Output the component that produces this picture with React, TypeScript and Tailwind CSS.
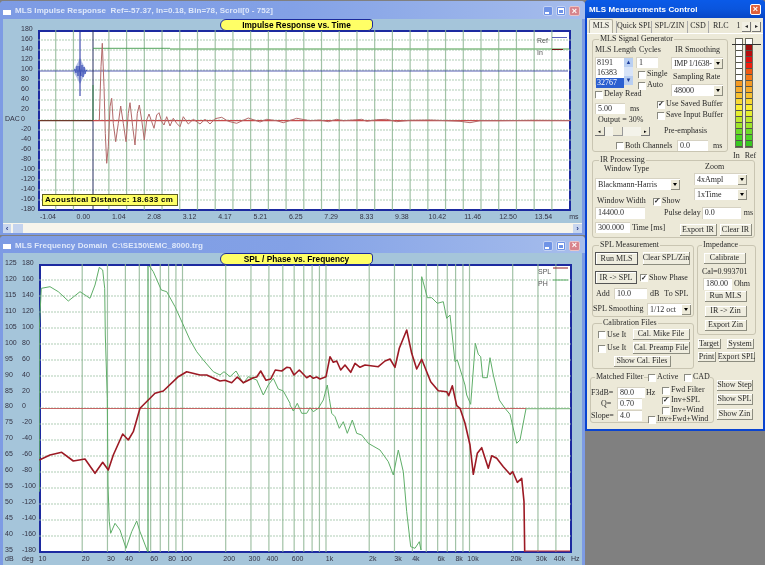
import React from "react";

type P = [number, number];
const W1X = Array.from({ length: 30 }, (_, i) => 38 + i * 17.72).filter((_, i) => i !== 3);
const W1Y = Array.from({ length: 19 }, (_, i) => 30 + i * 10);
const W2Y = Array.from({ length: 19 }, (_, i) => 264 + i * 16);
const fx = (f: number) => 39 + 143.5 * Math.log10(f / 10);
const W2F = [20, 30, 40, 50, 60, 70, 80, 90, 100, 200, 300, 400, 500, 600, 700, 800, 900, 1000, 2000, 3000, 4000, 5000, 6000, 7000, 8000, 9000, 10000, 20000, 30000, 40000];

const z1 = (pts: P[]) => pts.map(([x, y]) => `${(x / 3).toFixed(1)},${(y / 3).toFixed(1)}`).join(" ");
const z2 = (pts: P[]) => pts.map(([x, y]) => `${(x / 3).toFixed(1)},${(235 + y / 3).toFixed(1)}`).join(" ");
const shift = (pts: P[]) => pts.map(([x, y]) => [x + 870, y] as P);

const impulse: P[] = [[298,362],[303,200],[307,130],[312,260],[316,400],[320,490],[325,440],[330,320],[335,295],[340,370],[347,425],[355,370],[362,318],[370,370],[378,425],[385,340],[390,308],[398,380],[405,435],[412,340],[418,315],[425,360],[433,420],[440,360],[447,342],[455,365],[462,385],[470,345],[477,338],[485,365],[492,375],[500,350],[510,378],[520,355],[530,370],[540,380],[550,350],[565,372],[580,358],[600,372],[615,358],[630,372],[645,356],[665,352],[685,364],[710,370],[745,354],[780,366],[800,358],[830,362],[850,368],[890,355],[930,362],[960,360],[985,365],[1010,358],[1030,362],[1060,360],[1085,358],[1100,364],[1130,359],[1160,358],[1190,365],[1230,361],[1290,360],[1340,362],[1380,364],[1410,368],[1440,362],[1500,362],[1600,361],[1800,362],[1885,362],[1900,362],[1915,355],[1930,370],[1945,360],[1955,366],[2010,362],[2030,372],[2045,356],[2060,364],[2325,362]];

const phaseA: P[] = [[118,770],[118,280],[124,160],[150,155],[175,170],[205,198],[240,170],[270,190],[285,150],[298,97],[308,105],[314,160],[316,300],[322,490],[324,750],[328,860],[332,895],[345,865],[360,885],[378,940],[395,890],[410,858],[420,890],[443,950]];
const phaseB: P[] = [[448,93],[460,110],[484,165],[500,170],[525,215],[550,270],[570,315],[590,350],[610,375],[640,410],[660,420],[672,410],[690,425],[708,408],[730,445],[745,425],[770,435],[790,480],[805,450],[820,430],[835,462],[850,468],[870,505],...shift([[0,510],[10,528],[22,505],[35,535],[50,535],[60,518],[70,530],[85,520],[100,495],[112,450],[118,490],[125,535],[135,545],[148,580],[160,560],[172,595],[187,555],[200,595],[215,600],[235,625],[270,645],[295,680],[310,720],[325,645],[340,710],[350,830],[362,935],[375,940],[388,920],[393,945],[395,125],[402,150],[412,188],[425,188],[442,205],[460,200],[470,250],[480,240],[495,380],[502,375],[525,450],[530,480],[542,508],[556,325],[565,358],[572,365],[578,428],[592,428],[600,368],[610,420],[628,495],[645,520],[660,538],[680,625],[690,615],[708,521],[840,521]])];
const spl: P[] = [[118,675],[150,660],[185,652],[220,678],[255,672],[285,715],[308,682],[325,705],[340,660],[368,597],[385,615],[400,590],[420,520],[445,495],[465,475],[490,468],[535,425],[560,410],[600,420],[620,420],[660,438],[675,436],[695,443],[712,426],[730,443],[760,428],[770,426],[782,408],[798,436],[812,432],[826,405],[845,408],[860,397],[870,398],...shift([[12,420],[28,405],[50,428],[60,422],[70,430],[80,426],[90,432],[108,425],[120,365],[130,382],[140,378],[152,405],[165,390],[182,412],[195,385],[210,397],[225,390],[265,395],[285,378],[300,372],[315,397],[328,340],[350,285],[365,355],[380,402],[395,373],[410,410],[422,440],[445,467],[470,470],[476,482],[487,452],[500,512],[510,520],[525,565],[540,630],[550,718],[562,655],[575,638],[595,700],[605,662],[620,670],[640,695],[660,718],[668,710],[682,742],[695,730],[702,800],[704,950]])];

function TitleButtons() {
  return (
    <div className="flex gap-[3px] items-center">
      <span className="w-[10px] h-[10px] rounded-[2px] bg-[#6f93e6] border border-[#c4d2f2] flex items-end justify-start pl-[1px] pb-[1px]"><span className="w-[4px] h-[2px] bg-white" /></span>
      <span className="w-[10px] h-[10px] rounded-[2px] bg-[#6f93e6] border border-[#c4d2f2] flex items-center justify-center"><span className="w-[6px] h-[6px] border border-white border-t-2" /></span>
      <span className="w-[11px] h-[10px] rounded-[2px] bg-[#d8848c] border border-[#e8c4c8] flex items-center justify-center text-white text-[9px] leading-none font-bold font-['Liberation_Sans',sans-serif]">×</span>
    </div>
  );
}

function WinTitle({ children, short }: { children: React.ReactNode; short?: boolean }) {
  return (
    <div className={`${short ? "h-[17px]" : "h-[18px]"} flex items-center justify-between pt-[2px] pl-[3px] pr-[5px] bg-gradient-to-r from-[#7d9be4] via-[#83a1e6] to-[#a6bdec] rounded-t-[4px]`}>
      <div className="flex items-center gap-[4px] min-w-0">
        <span className="w-[8px] h-[7px] bg-white border-t-2 border-[#7d9be4] shrink-0" />
        <span className="text-[#dfe8fa] text-[8px] font-bold tracking-[0.06px] whitespace-pre font-['Liberation_Sans',sans-serif]">{children}</span>
      </div>
      <TitleButtons />
    </div>
  );
}

function Pill({ children }: { children: React.ReactNode }) {
  return (
    <div className="absolute left-[217px] top-0 z-10 w-[153px] h-[12px] bg-[#ffff66] border border-[#1c2a9c] rounded-l-[6px] rounded-tr-[3px] rounded-br-[5px] flex items-center justify-center text-[8.3px] font-bold leading-none text-black font-['Liberation_Sans',sans-serif]">
      {children}
    </div>
  );
}

const axisText = "text-[7px] leading-[10px] text-[#334] font-['Liberation_Sans',sans-serif]";

function Grid({ xs, ys, x0, x1, y0, y1 }: { xs: number[]; ys: number[]; x0: number; x1: number; y0: number; y1: number }) {
  return (
    <g>
      {ys.map((y) => <line key={`h${y}`} x1={x0} x2={x1} y1={y} y2={y} stroke="#9cc0a2" strokeWidth="1.2" strokeDasharray="2 1" opacity="0.8" />)}
      {xs.map((x) => <line key={`v${x}`} x1={x} x2={x} y1={y0} y2={y1} stroke="#8ab390" strokeWidth="1.2" opacity="0.8" />)}
    </g>
  );
}

function ImpulseWindow() {
  const labels = ["180","160","140","120","100","80","60","40","20","0","-20","-40","-60","-80","-100","-120","-140","-160","-180"];
  const xl = ["-1.04","0.00","1.04","2.08","3.12","4.17","5.21","6.25","7.29","8.33","9.38","10.42","11.46","12.50","13.54"];
  return (
    <section className="w-[585px] h-[234px] mt-[1px] shrink-0 flex flex-col bg-[#7d9be4] rounded-t-[4px]">
      <WinTitle>MLS Impulse Response  Ref=-57.37, In=0.18, Bin=78, Scroll[0 - 752]</WinTitle>
      <div className="mx-[3px] mb-[2px] flex-1 bg-[#a5c5da] flex flex-col relative">
        <Pill>Impulse Response vs. Time</Pill>
        <div className="h-[11px]" />
        <div className="flex">
          <div className={`w-[30px] h-[189px] -mt-[6px] -mb-[4px] flex flex-col justify-between pl-[2px] ${axisText}`}>
            {labels.map((l) => (
              <div key={l} className="flex h-[10px]">
                <span className="w-[16px] shrink-0">{l === "0" ? "DAC" : ""}</span>
                <span>{l}</span>
              </div>
            ))}
          </div>
          <div className="w-[5px]" />
          <div className="w-[533px] h-[181px] relative bg-white border-2 border-[#1c2aa0]">
            <svg className="absolute -left-[2px] -top-[2px]" width="533" height="181" viewBox="38 30 533 181">
              <Grid xs={W1X.slice(1)} ys={W1Y.slice(1, 18)} x0={38} x1={571} y0={30} y1={210} />
              <line x1="38" x2="568" y1="71" y2="71" stroke="#2a32a0" strokeWidth="0.8" />
              <line x1="93" x2="93" y1="30" y2="210" stroke="#283060" strokeWidth="1" />
              <polygon fill="#8ea0d8" opacity="0.7" points="73,71 77,64 80,58 83,64 87,71 83,78 80,84 77,78" />
              <line x1="80" x2="80" y1="30" y2="96" stroke="#1c2aa0" strokeWidth="1" />
              <polyline fill="none" stroke="#2a40b0" strokeWidth="0.8" opacity="0.85" points="74,71 75,69 76,73 77,66 78,76 79,66 81,76 82,65 83,77 84,67 85,74 86,70 87,71" />
              <line x1="93" x2="93" y1="120" y2="85" stroke="#3f8f4a" strokeWidth="1" />
              <line x1="93" x2="170" y1="48.3" y2="48.3" stroke="#3f9a4a" strokeWidth="0.9" />
              <line x1="170" x2="569" y1="49" y2="49" stroke="#85bd85" strokeWidth="1.4" />
              <line x1="38" x2="93" y1="120.6" y2="120.6" stroke="#6d3a2a" strokeWidth="1.2" />
              <line x1="93" x2="569" y1="120.6" y2="120.6" stroke="#c84a4a" strokeWidth="1.2" />
              <polyline fill="none" stroke="#b26a6a" strokeWidth="1" strokeLinejoin="round" points={z1(impulse)} />
              <line x1="552" x2="567" y1="37.5" y2="37.5" stroke="#3038a8" strokeWidth="0.8" />
              <line x1="552" x2="563" y1="49.5" y2="49.5" stroke="#7a1818" strokeWidth="1" />
            </svg>
            <span className="absolute left-[497px] top-[4px] text-[7px] leading-[10px] text-[#555] font-['Liberation_Sans',sans-serif]">Ref</span>
            <span className="absolute left-[497px] top-[16px] text-[7px] leading-[10px] text-[#555] font-['Liberation_Sans',sans-serif]">In</span>
            <div className="absolute left-[2px] bottom-[3px] w-[136px] h-[12px] bg-[#ffff66] border border-[#5b5b20] flex items-center pl-[2px] text-[8px] font-bold leading-none text-black tracking-[0.3px] whitespace-nowrap font-['Liberation_Sans',sans-serif]">
              Acoustical Distance: 18.633 cm
            </div>
          </div>
        </div>
        <div className={`h-[12px] flex items-center pl-[27.3px] ${axisText}`}>
          {xl.map((l) => <span key={l} className="w-[35.4px] text-center shrink-0">{l}</span>)}
          <span className="ml-[8px]">ms</span>
        </div>
        <div className="h-[10px] bg-[#f7f5ec] flex justify-between items-center">
          <span className="w-[8px] h-[9px] bg-[#c8d6ee] text-[#2a3f8a] text-[8px] leading-[9px] text-center font-bold font-['Liberation_Sans',sans-serif]">‹</span>
          <span className="w-[10px] h-[9px] ml-[2px] bg-[#c4d3ee] mr-auto" />
          <span className="w-[9px] h-[9px] bg-[#c8d6ee] text-[#2a3f8a] text-[8px] leading-[9px] text-center font-bold font-['Liberation_Sans',sans-serif]">›</span>
        </div>
      </div>
    </section>
  );
}

function FreqWindow() {
  const db = ["125","120","115","110","105","100","95","90","85","80","75","70","65","60","55","50","45","40","35"];
  const deg = ["180","160","140","120","100","80","60","40","20","0","-20","-40","-60","-80","-100","-120","-140","-160","-180"];
  const xl: [string, number][] = [["10",10],["20",20],["30",30],["40",40],["60",60],["80",80],["100",100],["200",200],["300",300],["400",400],["600",600],["1k",1000],["2k",2000],["3k",3000],["4k",4000],["6k",6000],["8k",8000],["10k",10000],["20k",20000],["30k",30000],["40k",40000]];
  return (
    <section className="w-[585px] h-[329px] shrink-0 flex flex-col bg-[#7d9be4] rounded-t-[4px] mt-[1px]">
      <WinTitle short>MLS Frequency Domain  C:\SE150\EMC_8000.trg</WinTitle>
      <div className="mx-[3px] flex-1 bg-[#a5c5da] flex flex-col relative">
        <Pill>SPL / Phase vs. Frequency</Pill>
        <div className="h-[11px]" />
        <div className="flex">
          <div className={`w-[31px] h-[297px] -mt-[6px] -mb-[5px] flex flex-col justify-between pl-[2px] ${axisText}`}>
            {db.map((d, i) => (
              <div key={d} className="flex h-[10px]">
                <span className="w-[17px] shrink-0">{d}</span>
                <span>{deg[i]}</span>
              </div>
            ))}
          </div>
          <div className="w-[5px]" />
          <div className="w-[533px] h-[289px] relative bg-white border-2 border-[#1c2aa0]">
            <svg className="absolute -left-[2px] -top-[2px]" width="533" height="289" viewBox="39 264 533 289">
              <Grid xs={W2F.map(fx)} ys={W2Y.slice(1, 18)} x0={39} x1={571} y0={264} y1={552} />
              <line x1="148" x2="148" y1="266" y2="552" stroke="#2f8f3f" strokeWidth="1" />
              <polyline fill="none" stroke="#5fae68" strokeWidth="1" strokeLinejoin="round" points={z2(phaseA)} />
              <polyline fill="none" stroke="#5fae68" strokeWidth="1" strokeLinejoin="round" points={z2(phaseB)} />
              <line x1="41" x2="526" y1="408.5" y2="408.5" stroke="#c25656" strokeWidth="0.9" />
              <line x1="526" x2="570" y1="408.5" y2="408.5" stroke="#8fbf8f" strokeWidth="0.9" />
              <polyline fill="none" stroke="#9c1a24" strokeWidth="1.6" strokeLinejoin="round" points={z2(spl)} />
              <line x1="524" x2="570" y1="551" y2="551" stroke="#c83030" strokeWidth="1.2" />
              <line x1="553" x2="568" y1="268" y2="268" stroke="#8c1c24" strokeWidth="1" />
              <line x1="553" x2="568" y1="280" y2="280" stroke="#5fae68" strokeWidth="1" />
            </svg>
            <span className="absolute left-[497px] top-[1px] text-[7px] leading-[10px] text-[#555] font-['Liberation_Sans',sans-serif]">SPL</span>
            <span className="absolute left-[497px] top-[13px] text-[7px] leading-[10px] text-[#555] font-['Liberation_Sans',sans-serif]">PH</span>
          </div>
        </div>
        <div className={`h-[12px] relative ${axisText}`}>
          <span className="absolute left-[2px] top-[1px]">dB</span>
          <span className="absolute left-[19px] top-[1px]">deg</span>
          {xl.map(([t, f]) => (
            <span key={t} className="absolute top-[1px] -translate-x-1/2" style={{ left: `${fx(f) + 0.5}px` }}>{t}</span>
          ))}
          <span className="absolute left-[568px] top-[1px]">Hz</span>
        </div>
      </div>
    </section>
  );
}

const ctl = "text-[8px] leading-[10px] text-[#2a2a2a] whitespace-nowrap font-['Liberation_Serif',serif]";

function Check({ label, checked, className = "" }: { label?: string; checked?: boolean; className?: string }) {
  return (
    <div className={`h-[10px] flex items-center gap-[2px] ${ctl} ${className}`}>
      <span className="w-[7px] h-[7px] shrink-0 bg-white border-l border-t border-[#8a8a80] shadow-[1px_1px_0_#fff] flex items-center justify-center text-[7px] leading-none font-bold">
        {checked ? "✓" : ""}
      </span>
      {label && <span>{label}</span>}
    </div>
  );
}

function Field({ value, className = "" }: { value: string; className?: string }) {
  return <div className={`h-[11px] bg-white pl-[2px] shrink-0 border-l border-t border-[#d6d2c2] ${ctl} ${className}`}>{value}</div>;
}

function Btn({ children, className = "" }: { children: React.ReactNode; className?: string }) {
  return (
    <div className={`shrink-0 flex items-center justify-center bg-[#efeddf] border-r border-b border-[#8d8d80] shadow-[inset_1px_1px_0_#fff] ${ctl} ${className}`}>
      {children}
    </div>
  );
}

function Combo({ value, className = "" }: { value: string; className?: string }) {
  return (
    <div className={`h-[12px] bg-white flex items-center justify-between shrink-0 border-l border-t border-[#d6d2c2] ${ctl} ${className}`}>
      <span className="pl-[2px]">{value}</span>
      <span className="w-[9px] h-[10px] shrink-0 bg-[#ece9d8] border-r border-b border-[#8d8d80] flex items-center justify-center">
        <span className="w-0 h-0 border-x-[2.5px] border-x-transparent border-t-[3px] border-t-black" />
      </span>
    </div>
  );
}

function Group({ title, className = "", children }: { title: string; className?: string; children: React.ReactNode }) {
  return (
    <fieldset className={`border border-[#c9c5b2] rounded-[3px] min-w-0 shrink-0 ${className}`}>
      <legend className={`ml-[4px] px-[1px] ${ctl}`}>{title}</legend>
      {children}
    </fieldset>
  );
}

function Meter({ colors }: { colors: string[] }) {
  return (
    <div className="flex flex-col w-[8px] border border-[#6d6d60]">
      {colors.map((c, i) => <span key={i} className="h-[6px] border-b border-[#55554a]" style={{ background: c }} />)}
    </div>
  );
}

const IN = ["#fff","#fff","#fff","#fff","#fff","#fff","#fff","#f59a22","#f7ac2c","#f7c030","#f9d932","#f9ee30","#e6ee2e","#bfe82c","#9ee42a","#6cdc26","#4cd424","#38c820"];
const REF = ["#fff","#a01010","#b80e0e","#e01010","#f02010","#f05a12","#f47a18","#f59a22","#f7ac2c","#f7c030","#f9d932","#f9ee30","#e6ee2e","#bfe82c","#9ee42a","#6cdc26","#4cd424","#38c820"];

function ControlPanel() {
  return (
    <aside className="w-[180px] h-[431px] shrink-0 relative flex flex-col bg-[#ece9d8] border-x-2 border-b-2 border-[#0a44d0] rounded-t-[4px]">
      <div className="-mx-[2px] h-[18px] shrink-0 rounded-t-[4px] bg-gradient-to-b from-[#0a5ae8] via-[#0a55dd] to-[#0746c6] flex items-center justify-between pt-[1px] pl-[4px] pr-[4px]">
        <span className="text-white text-[8px] font-bold tracking-[0.12px] font-['Liberation_Sans',sans-serif]">MLS Measurements Control</span>
        <span className="w-[11px] h-[11px] rounded-[2px] bg-[#e0603a] border border-white text-white text-[9px] leading-[9px] text-center font-bold font-['Liberation_Sans',sans-serif]">×</span>
      </div>
      <div className={`h-[15px] shrink-0 flex items-end pl-[2px] relative ${ctl} font-['Liberation_Sans',sans-serif]`}>
        <span className="w-[24px] h-[14px] text-center leading-[12px] bg-[#f2f0e4] border-t border-x border-[#b0ad9c] rounded-t-[2px]">MLS</span>
        <span className="ml-[3px] w-[35px] h-[12px] border-l border-[#aaa] text-center">Quick SPL</span>
        <span className="w-[36px] h-[12px] border-l border-[#aaa] text-center">SPL/ZIN</span>
        <span className="w-[21px] h-[12px] border-l border-[#aaa] text-center">CSD</span>
        <span className="w-[28px] h-[12px] border-l border-[#aaa] pl-[4px]">RLC</span>
        <span className="w-[5px] h-[12px] text-center">1</span>
        <span className="absolute right-[2px] bottom-[1px] flex gap-[1px]">
          <span className="w-[9px] h-[10px] bg-[#f2f0e4] border-r border-b border-[#777] text-center text-[6px] leading-[9px]">◂</span>
          <span className="w-[9px] h-[10px] bg-[#f2f0e4] border-r border-b border-[#777] text-center text-[6px] leading-[9px]">▸</span>
        </span>
      </div>
      <div className="flex-1 flex flex-col pl-[5px] pt-[1px] shadow-[inset_0_1px_0_#fff]">
        {/* Generator and meters */}
        <div className="flex h-[121px]">
          <Group title="MLS Signal Generator" className="w-[136px] h-[118px] pl-[2px]">
            <div className="flex h-[56px] pt-[1px]">
              <div className="w-[76px] flex flex-col">
                <div className="flex">
                  <span className={`w-[44px] ${ctl}`}>MLS Length</span>
                  <span className={ctl}>Cycles</span>
                </div>
                <div className="flex mt-[2px]">
                  <div className="w-[38px] h-[28px] bg-white flex border-l border-t border-[#d6d2c2]">
                    <div className={`flex-1 flex flex-col ${ctl} leading-[9px]`}>
                      <span className="pl-[1px]">8191</span>
                      <span className="pl-[1px]">16383</span>
                      <span className="pl-[1px] bg-[#2b5fd0] text-white">32767</span>
                    </div>
                    <div className="w-[9px] flex flex-col justify-between bg-[#d8e4f8]">
                      <span className="h-[9px] bg-[#b9cff2] text-[#1c3c9c] text-[6px] leading-[9px] text-center">▲</span>
                      <span className="h-[9px] bg-[#b9cff2] text-[#1c3c9c] text-[6px] leading-[9px] text-center">▼</span>
                    </div>
                  </div>
                  <div className="ml-[3px] flex flex-col">
                    <Field value="1" className="w-[22px]" />
                    <Check label="Single" className="mt-[1px] ml-[2px]" />
                    <Check label="Auto" className="mt-[1px] ml-[2px]" />
                  </div>
                </div>
                <Check label="Delay Read" className="-mt-[1px]" />
              </div>
              <div className="flex flex-col">
                <span className={`ml-[4px] ${ctl}`}>IR Smoothing</span>
                <Combo value="IMP 1/1638-" className="w-[52px] mt-[2px] tracking-[-0.3px]" />
                <span className={`ml-[2px] mt-[3px] ${ctl}`}>Sampling Rate</span>
                <Combo value="48000" className="w-[52px] mt-[2px]" />
              </div>
            </div>
            <div className="flex">
              <div className="w-[62px] flex flex-col mt-[3px]">
                <div className="flex items-center">
                  <Field value="5.00" className="w-[30px]" />
                  <span className={`ml-[5px] ${ctl}`}>ms</span>
                </div>
                <span className={`mt-[1px] ml-[3px] ${ctl}`}>Output = 30%</span>
                <div className="mt-[2px] w-[55px] h-[9px] bg-[#f4f3ea] flex items-center justify-between">
                  <span className="w-[10px] h-[9px] bg-[#ece9d8] border-r border-b border-[#777] text-[5px] leading-[8px] text-center">◂</span>
                  <span className="w-[10px] h-[9px] bg-[#ece9d8] border-r border-b border-[#999] mr-auto ml-[8px]" />
                  <span className="w-[9px] h-[9px] bg-[#ece9d8] border-r border-b border-[#777] text-[5px] leading-[8px] text-center">▸</span>
                </div>
              </div>
              <div className="flex flex-col -mt-[1px]">
                <Check label="Use Saved Buffer" checked />
                <Check label="Save Input Buffer" className="mt-[1px]" />
                <span className={`mt-[6px] ml-[7px] ${ctl}`}>Pre-emphasis</span>
              </div>
            </div>
            <div className="flex items-center mt-[4px] ml-[21px]">
              <Check label="Both Channels" className="w-[61px]" />
              <Field value="0.0" className="w-[31px] h-[10px] leading-[9px]" />
              <span className={`ml-[5px] ${ctl}`}>ms</span>
            </div>
          </Group>
          <div className="ml-[7px] pt-[4px] flex flex-col relative">
            <div className="flex gap-[2px]">
              <Meter colors={IN} />
              <Meter colors={REF} />
            </div>
            <span className="absolute -left-[3px] -right-[5px] top-[10px] h-px bg-[#333]" />
            <div className={`flex gap-[5px] mt-[3px] -ml-[2px] ${ctl}`}><span>In</span><span>Ref</span></div>
          </div>
        </div>

        {/* IR Processing */}
        <Group title="IR Processing" className="w-[163px] h-[83px] pl-[2px]">
          <div className="flex h-[30px]">
            <div className="w-[99px] flex flex-col -mt-[1px]">
              <span className={`ml-[9px] ${ctl}`}>Window Type</span>
              <Combo value="Blackmann-Harris" className="w-[85px] mt-[4px]" />
            </div>
            <div className="flex flex-col -mt-[3px]">
              <span className={`ml-[11px] ${ctl}`}>Zoom</span>
              <Combo value="4xAmpl" className="w-[53px] mt-[1px]" />
              <Combo value="1xTime" className="w-[53px] mt-[3px]" />
            </div>
          </div>
          <div className="flex items-center ml-[2px]">
            <span className={`w-[56px] ${ctl}`}>Window Width</span>
            <Check label="Show" checked className="mt-[1px]" />
          </div>
          <div className="flex items-center mt-[1px]">
            <Field value="14400.0" className="w-[50px] h-[12px]" />
            <span className={`ml-[19px] ${ctl}`}>Pulse delay</span>
            <Field value="0.0" className="w-[39px] h-[12px] ml-[1px]" />
            <span className={`ml-[3px] ${ctl}`}>ms</span>
          </div>
          <div className="flex items-start mt-[3px]">
            <Field value="300.000" className="w-[35px]" />
            <span className={`ml-[2px] w-[48px] mt-[1px] ${ctl}`}>Time [ms]</span>
            <Btn className="w-[37px] h-[12px] mt-[2px]">Export IR</Btn>
            <Btn className="w-[32px] h-[12px] mt-[2px] ml-[3px]">Clear IR</Btn>
          </div>
        </Group>

        <div className="flex mt-[2px]">
          <div className="flex flex-col w-[102px]">
            <Group title="SPL Measurement" className="h-[77px] pl-[2px]">
              <div className="flex items-center mt-[2px]">
                <Btn className="w-[43px] h-[13px] border border-[#555]">Run MLS</Btn>
                <Btn className="w-[47px] h-[13px] ml-[5px]">Clear SPL/Zin</Btn>
              </div>
              <div className="flex items-center mt-[6px]">
                <Btn className="w-[42px] h-[13px] border border-[#555]">IR -&gt; SPL</Btn>
                <Check label="Show Phase" checked className="ml-[3px]" />
              </div>
              <div className="flex items-center mt-[4px]">
                <span className={`w-[19px] pl-[1px] ${ctl}`}>Add</span>
                <Field value="10.0" className="w-[33px] h-[10px] leading-[9px]" />
                <span className={`ml-[3px] ${ctl}`}>dB</span>
                <span className={`ml-[5px] ${ctl}`}>To SPL</span>
              </div>
              <div className="flex items-center mt-[4px] -ml-[2px]">
                <span className={`w-[54px] ${ctl}`}>SPL Smoothing</span>
                <Combo value="1/12 oct" className="w-[44px]" />
              </div>
            </Group>
            <Group title="Calibration Files" className="h-[51px] mt-[1px] pl-[5px]">
              <div className="flex items-center mt-[1px]">
                <Check label="Use It" className="w-[35px]" />
                <Btn className="w-[57px] h-[11px]">Cal. Mike File</Btn>
              </div>
              <div className="flex items-center mt-[2px]">
                <Check label="Use It" className="w-[35px]" />
                <Btn className="w-[57px] h-[12px]">Cal. Preamp File</Btn>
              </div>
              <div className="flex mt-[2px] ml-[16px]">
                <Btn className="w-[57px] h-[11px]">Show Cal. Files</Btn>
              </div>
            </Group>
          </div>
          <div className="flex flex-col w-[59px] ml-[3px]">
            <Group title="Impedance" className="h-[95px]">
              <Btn className="h-[11px] w-[42px] mt-[3px] ml-[6px]">Calibrate</Btn>
              <span className={`block mt-[3px] ml-[4px] ${ctl}`}>Cal=0.993701</span>
              <div className="flex items-center mt-[1px] ml-[5px]">
                <Field value="180.00" className="w-[29px] h-[12px]" />
                <span className={`ml-[2px] ${ctl}`}>Ohm</span>
              </div>
              <Btn className="h-[11px] w-[42px] mt-[1px] ml-[7px]">Run MLS</Btn>
              <Btn className="h-[11px] w-[42px] mt-[4px] ml-[7px]">IR -&gt; Zin</Btn>
              <Btn className="h-[11px] w-[42px] mt-[3px] ml-[7px]">Export Zin</Btn>
            </Group>
            <div className="flex gap-[6px] mt-[4px] ml-[1px]">
              <Btn className="w-[23px] h-[10px]">Target</Btn>
              <Btn className="w-[27px] h-[10px]">System</Btn>
            </div>
            <div className="flex gap-[3px] mt-[3px] ml-[1px]">
              <Btn className="w-[18px] h-[10px]">Print</Btn>
              <Btn className="w-[36px] h-[10px]">Export SPL</Btn>
            </div>
          </div>
        </div>

        <div className="flex mt-[3px] -ml-[2px]">
          <Group title="Matched Filter" className="w-[124px] h-[51px] relative">
            <div className="absolute left-[57px] -top-[10px] flex bg-[#ece9d8]">
              <Check label="Active" className="w-[36px]" />
              <Check label="CAD" />
            </div>
            <div className="flex">
              <div className="flex flex-col w-[71px] mt-[5px]">
                <div className="flex items-center">
                  <span className={`w-[26px] ${ctl}`}>F3dB=</span>
                  <Field value="80.0" className="w-[28px] h-[10px] leading-[9px]" />
                  <span className={`ml-[1px] ${ctl}`}>Hz</span>
                </div>
                <div className="flex items-center">
                  <span className={`w-[26px] pl-[10px] ${ctl}`}>Q=</span>
                  <Field value="0.70" className="w-[25px] h-[10px] leading-[9px]" />
                </div>
                <div className="flex items-center mt-[1px]">
                  <span className={`w-[26px] ${ctl}`}>Slope=</span>
                  <Field value="4.0" className="w-[25px] h-[10px] leading-[9px]" />
                </div>
              </div>
              <div className="flex flex-col mt-[3px]">
                <Check label="Fwd Filter" />
                <Check label="Inv+SPL" checked />
                <Check label="Inv+Wind" />
                <Check label="Inv+Fwd+Wind" className="-ml-[14px] -mt-[1px]" />
              </div>
            </div>
          </Group>
          <div className="flex flex-col ml-[3px] mt-[8px]">
            <Btn className="w-[36px] h-[11px]">Show Step</Btn>
            <Btn className="w-[36px] h-[11px] mt-[3px]">Show SPL</Btn>
            <Btn className="w-[36px] h-[11px] mt-[4px]">Show Zin</Btn>
          </div>
        </div>
      </div>
    </aside>
  );
}

export default function App() {
  return (
    <div className="w-[765px] h-[565px] overflow-hidden bg-[#808080] flex items-start blur-[0.3px]">
      <div className="flex flex-col w-[585px] shrink-0">
        <ImpulseWindow />
        <FreqWindow />
      </div>
      <ControlPanel />
    </div>
  );
}
